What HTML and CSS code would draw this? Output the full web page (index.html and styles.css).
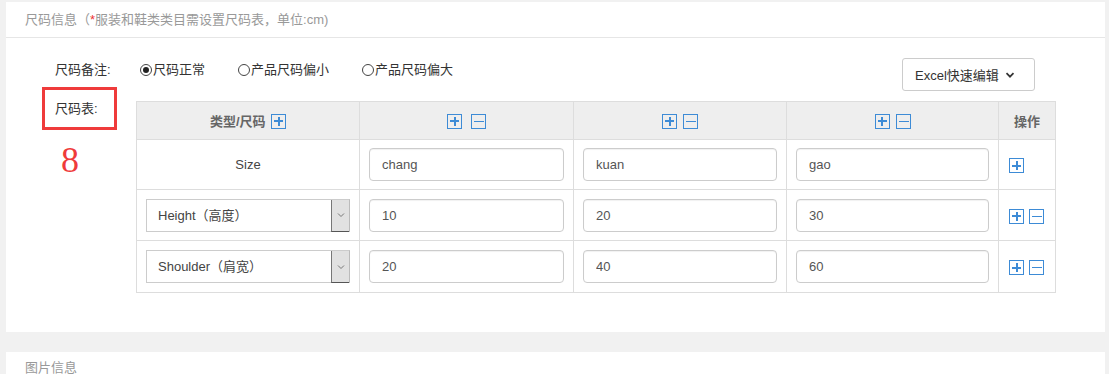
FILE: index.html
```html
<!DOCTYPE html>
<html lang="zh">
<head>
<meta charset="utf-8">
<title>尺码信息</title>
<link rel="stylesheet" href="styles.css">
</head>
<body>
<section class="panel">
  <div class="panel-head">尺码信息（<span class="req">*</span>服装和鞋类类目需设置尺码表，单位:cm)</div>
  <div class="panel-body">
    <div class="remark-row">
      <span class="label">尺码备注:</span>
      <label class="radio"><span class="dot checked"></span>尺码正常</label>
      <label class="radio"><span class="dot"></span>产品尺码偏小</label>
      <label class="radio"><span class="dot"></span>产品尺码偏大</label>
      <span class="spacer"></span>
      <button class="excel-btn">Excel快速编辑 <svg class="chev" width="10" height="10" viewBox="0 0 10 10"><path d="M1.5 3.2 L5 6.7 L8.5 3.2" fill="none" stroke="#333" stroke-width="1.7"/></svg></button>
    </div>
    <div class="table-row">
      <div class="label-col">
        <span class="label tbl-label">尺码表:</span>
        <span class="anno-box"></span>
        <span class="anno-num">8</span>
      </div>
      <table class="size-table">
        <colgroup>
          <col class="c1"><col class="c2"><col class="c3"><col class="c4"><col class="c5">
        </colgroup>
        <thead>
          <tr>
            <th>类型/尺码 <span class="ico plus"></span></th>
            <th><span class="icons wide"><span class="ico plus"></span><span class="ico minus"></span></span></th>
            <th><span class="icons"><span class="ico plus"></span><span class="ico minus"></span></span></th>
            <th><span class="icons"><span class="ico plus"></span><span class="ico minus"></span></span></th>
            <th>操作</th>
          </tr>
        </thead>
        <tbody>
          <tr class="r1">
            <td class="center">Size</td>
            <td><input class="inp" value="chang"></td>
            <td><input class="inp" value="kuan"></td>
            <td><input class="inp" value="gao"></td>
            <td class="ops"><span class="ico plus"></span></td>
          </tr>
          <tr class="r2">
            <td><div class="sel"><span class="sel-text">Height（高度）</span><span class="sel-btn"><svg width="8" height="6" viewBox="0 0 8 6"><path d="M1 1.5 L4 4.5 L7 1.5" fill="none" stroke="#777" stroke-width="1"/></svg></span></div></td>
            <td><input class="inp" value="10"></td>
            <td><input class="inp" value="20"></td>
            <td><input class="inp" value="30"></td>
            <td class="ops"><span class="icons"><span class="ico plus"></span><span class="ico minus"></span></span></td>
          </tr>
          <tr class="r3">
            <td><div class="sel"><span class="sel-text">Shoulder（肩宽）</span><span class="sel-btn"><svg width="8" height="6" viewBox="0 0 8 6"><path d="M1 1.5 L4 4.5 L7 1.5" fill="none" stroke="#777" stroke-width="1"/></svg></span></div></td>
            <td><input class="inp" value="20"></td>
            <td><input class="inp" value="40"></td>
            <td><input class="inp" value="60"></td>
            <td class="ops"><span class="icons"><span class="ico plus"></span><span class="ico minus"></span></span></td>
          </tr>
        </tbody>
      </table>
    </div>
  </div>
</section>
<section class="panel panel2">
  <div class="panel-head">图片信息</div>
</section>
</body>
</html>
```
FILE: styles.css
```css
* { box-sizing: border-box; }
html, body { margin: 0; padding: 0; }
html { overflow: hidden; }
body {
  background: #f1f1f1;
  font-family: "Liberation Sans", Arial, "Noto Sans CJK SC", sans-serif;
  font-size: 13px;
  color: #333;
  padding: 2px 4px 0 6px;
  height: 374px;
  overflow: hidden;
}
.panel {
  background: #fff;
  height: 330px;
}
.panel2 { margin-top: 20px; height: 22px; overflow: hidden; }
.panel-head {
  height: 36px;
  line-height: 35px;
  padding-left: 19px;
  color: #999;
  border-bottom: 1px solid #e6e6e6;
}
.panel2 .panel-head { border-bottom: none; line-height: 32px; }
.req { color: #e33; }
.panel-body {
  padding: 20px 49px 0 49px;
}
.remark-row {
  display: flex;
  align-items: flex-start;
  height: 33px;
}
.label { display: inline-block; color: #333; }
.remark-row .label { width: 85px; line-height: 24px; }
.radio {
  display: inline-flex;
  align-items: center;
  line-height: 24px;
  margin-right: 33px;
  color: #333;
}
.dot {
  width: 12px;
  height: 12px;
  border: 1px solid #444;
  border-radius: 50%;
  margin-right: 1px;
  position: relative;
}
.dot.checked::after {
  content: "";
  position: absolute;
  left: 2px; top: 2px;
  width: 6px; height: 6px;
  border-radius: 50%;
  background: #222;
}
.spacer { flex: 1; }
.excel-btn {
  width: 133px;
  height: 33px;
  margin-right: 21px;
  border: 1px solid #ccc;
  border-radius: 3px;
  background: #fff;
  font: inherit;
  color: #333;
  padding: 0 0 0 12px;
  text-align: left;
  display: flex;
  align-items: center;
}
.chev { margin-left: 6px; }
.table-row {
  display: flex;
  margin-top: 10px;
}
.label-col {
  width: 81px;
  flex-shrink: 0;
  position: relative;
}
.tbl-label { margin-top: 1px; line-height: 14px; }
.anno-box {
  position: absolute;
  left: -13px; top: -14px;
  width: 75px; height: 43px;
  border: 3px solid #ef3b3b;
}
.anno-num {
  position: absolute;
  left: 6px; top: 41px;
  font-family: "Liberation Serif", "Times New Roman", serif;
  font-size: 36px;
  line-height: 1;
  color: #ef3b3b;
}
.size-table {
  width: 919px;
  flex-shrink: 0;
  border-collapse: collapse;
  table-layout: fixed;
  border: 1px solid #ddd;
}
.c1 { width: 223px; }
.c2 { width: 214px; }
.c3 { width: 213px; }
.c4 { width: 212px; }
.c5 { width: 57px; }
.size-table th {
  background: #eee;
  height: 38px;
  border: 1px solid #ddd;
  color: #666;
  font-weight: bold;
  padding: 0;
  text-align: center;
  vertical-align: middle;
}
.size-table td {
  border: 1px solid #ddd;
  padding: 0 9px;
  vertical-align: middle;
}
.r1 td { height: 50px; }
.r2 td { height: 51px; }
.r3 td { height: 52px; }
.center { text-align: center; color: #444; }
.ops { text-align: left; padding-left: 10px !important; }
.icons { display: inline-flex; gap: 6px; vertical-align: middle; }
.icons.wide { gap: 9px; }
.ops .icons { gap: 5px; }
.ico {
  display: inline-block;
  width: 15px;
  height: 15px;
  border: 1px solid #3d8bd6;
  position: relative;
  vertical-align: middle;
}
th > .ico { margin-left: 2px; margin-top: -3px; }
.ico.plus::before, .ico.plus::after, .ico.minus::before {
  content: "";
  position: absolute;
  background: #3d8bd6;
}
.ico.plus::before { left: 2px; top: 5.5px; width: 9px; height: 2.2px; }
.ico.plus::after { left: 5.5px; top: 2px; width: 2.2px; height: 9px; }
.ico.minus::before { left: 2px; top: 6px; width: 10px; height: 1px; }
.ops .ico { margin-top: 2px; }
.inp {
  display: block;
  width: 100%;
  height: 33px;
  border: 1px solid #ccc;
  border-radius: 4px;
  padding: 0 12px;
  font: inherit;
  color: #555;
  box-shadow: inset 0 1px 1px rgba(0,0,0,0.06);
  outline: none;
}
.sel {
  display: flex;
  height: 33px;
  width: 204px;
  border: 1px solid #ccc;
  border-right-color: #bbb;
}
.sel-text {
  flex: 1;
  line-height: 31px;
  padding-left: 11px;
  color: #444;
}
.sel-btn {
  width: 18px;
  background: #e1e1e1;
  border-left: 1px solid #777;
  border-bottom: 1px solid #555;
  display: flex;
  align-items: center;
  justify-content: center;
  margin-bottom: -1px;
}
```
